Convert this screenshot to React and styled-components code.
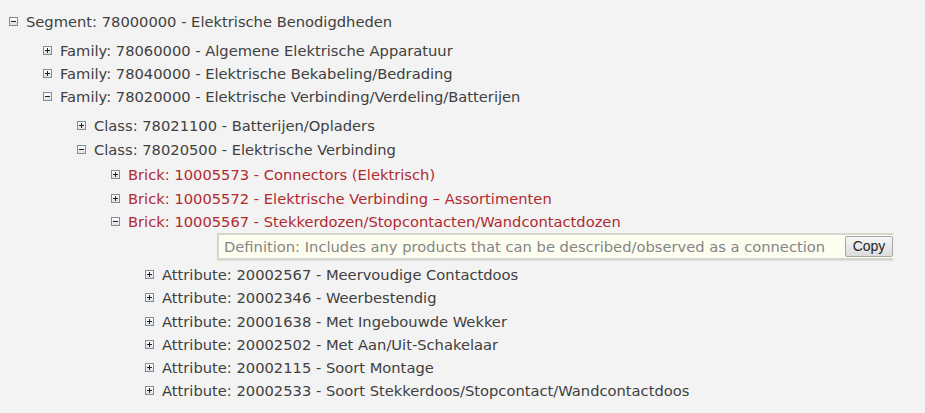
import React from "react";
import styled, { createGlobalStyle } from "styled-components";

const Global = createGlobalStyle`
  html, body { margin: 0; padding: 0; background: #f3f3f3; }
  body { font-family: "DejaVu Sans", Verdana, sans-serif; }
`;

const Page = styled.div`
  width: 925px;
  height: 413px;
  box-sizing: border-box;
  padding: 10px 0 0 9px;
  background: #f3f3f3;
  overflow: hidden;
`;

const List = styled.ul`
  list-style: none;
  margin: ${(p) => (p.$top != null ? p.$top : 5.6)}px 0 0 0;
  padding: 0 0 ${(p) => (p.$bottom != null ? p.$bottom : 5.6)}px ${(p) => (p.$indent ? 34 : 0)}px;
`;

const Row = styled.div`
  display: flex;
  align-items: center;
  height: 23.25px;
  font-size: 14.7px;
  white-space: nowrap;
  color: ${(p) => (p.$brick ? "#b02a2f" : "#404040")};
`;

const Toggle = styled.span`
  position: relative;
  box-sizing: border-box;
  width: 9px;
  height: 9px;
  margin-right: 8px;
  flex: none;
  border: 1px solid #7f8c99;
  background: linear-gradient(#ffffff, #dde2e7);
  &::before {
    content: "";
    position: absolute;
    left: 1px;
    top: 3px;
    width: 5px;
    height: 1px;
    background: #1e1e1e;
  }
  &::after {
    content: "";
    display: ${(p) => (p.$open ? "none" : "block")};
    position: absolute;
    left: 3px;
    top: 1px;
    width: 1px;
    height: 5px;
    background: #1e1e1e;
  }
`;

const Definition = styled.div`
  display: flex;
  align-items: center;
  justify-content: space-between;
  box-sizing: border-box;
  width: 676px;
  height: 27px;
  margin: 0 0 3px 106px;
  padding: 0 0 0 5px;
  background: #fdfdf0;
  border: 2px solid #d6d6cc;
  border-right: none;
  box-shadow: 0 1px 1px rgba(0, 0, 0, 0.08);
  font-size: 14.7px;
  color: #858585;
  white-space: nowrap;
`;

const CopyButton = styled.button`
  box-sizing: border-box;
  height: 21px;
  width: 48px;
  padding: 0 0 2px;
  margin: 0;
  font-family: "Liberation Sans", Arial, sans-serif;
  font-size: 14px;
  color: #1e1e1e;
  background: linear-gradient(#f6f6f6, #dcdcdc);
  border: 1px solid #a8a8a8;
  border-radius: 2px;
`;

const attributes = [
  ["20002567", "Meervoudige Contactdoos"],
  ["20002346", "Weerbestendig"],
  ["20001638", "Met Ingebouwde Wekker"],
  ["20002502", "Met Aan/Uit-Schakelaar"],
  ["20002115", "Soort Montage"],
  ["20002533", "Soort Stekkerdoos/Stopcontact/Wandcontactdoos"],
];

function Node({ open, brick, children }) {
  return (
    <Row $brick={brick}>
      <Toggle $open={open} />
      <span>{children}</span>
    </Row>
  );
}

export default function App() {
  return (
    <Page>
      <Global />
      <List $top={0}>
        <li>
          <Node open>Segment: 78000000 - Elektrische Benodigdheden</Node>
          <List $indent>
            <li>
              <Node>Family: 78060000 - Algemene Elektrische Apparatuur</Node>
            </li>
            <li>
              <Node>Family: 78040000 - Elektrische Bekabeling/Bedrading</Node>
            </li>
            <li>
              <Node open>Family: 78020000 - Elektrische Verbinding/Verdeling/Batterijen</Node>
              <List $indent>
                <li>
                  <Node>Class: 78021100 - Batterijen/Opladers</Node>
                </li>
                <li>
                  <Node open>Class: 78020500 - Elektrische Verbinding</Node>
                  <List $indent $top={2.6}>
                    <li>
                      <Node brick>Brick: 10005573 - Connectors (Elektrisch)</Node>
                    </li>
                    <li>
                      <Node brick>Brick: 10005572 - Elektrische Verbinding – Assortimenten</Node>
                    </li>
                    <li>
                      <Node brick open>
                        Brick: 10005567 - Stekkerdozen/Stopcontacten/Wandcontactdozen
                      </Node>
                      <Definition>
                        <span>
                          Definition: Includes any products that can be described/observed as a connection
                        </span>
                        <CopyButton type="button">Copy</CopyButton>
                      </Definition>
                      <List $indent $top={0}>
                        {attributes.map(([code, name]) => (
                          <li key={code}>
                            <Node>
                              Attribute: {code} - {name}
                            </Node>
                          </li>
                        ))}
                      </List>
                    </li>
                  </List>
                </li>
              </List>
            </li>
          </List>
        </li>
      </List>
    </Page>
  );
}
